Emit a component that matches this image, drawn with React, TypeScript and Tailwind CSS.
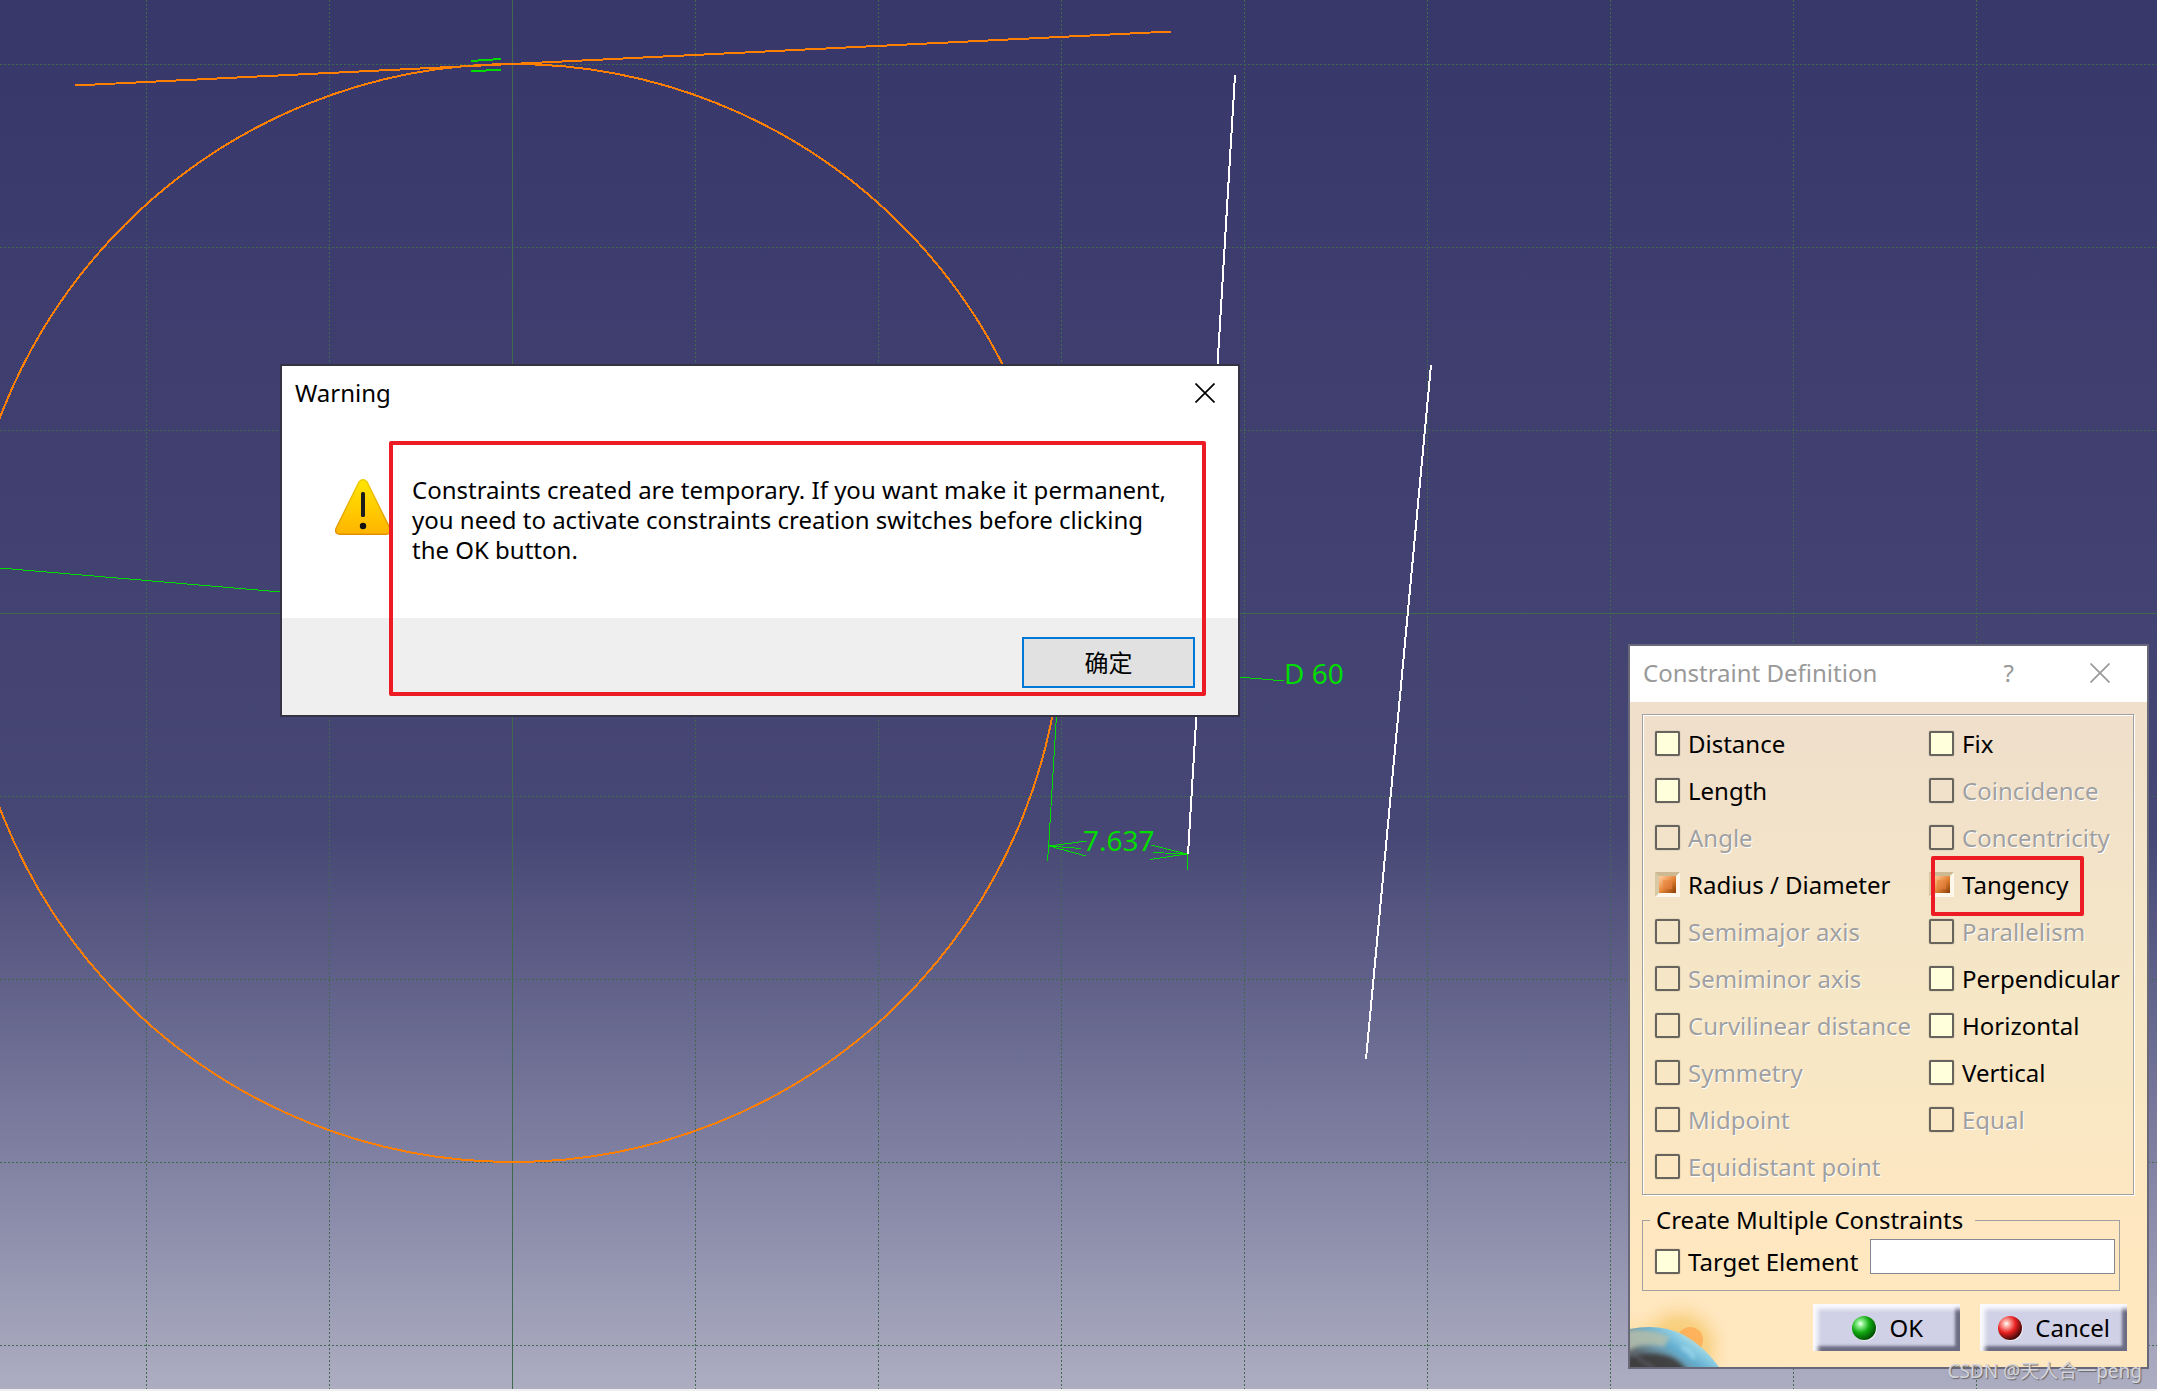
import React from "react";

type Option = { label: string; checked?: boolean; disabled?: boolean };

const leftOptions: Option[] = [
  { label: "Distance" },
  { label: "Length" },
  { label: "Angle", disabled: true },
  { label: "Radius / Diameter", checked: true },
  { label: "Semimajor axis", disabled: true },
  { label: "Semiminor axis", disabled: true },
  { label: "Curvilinear distance", disabled: true },
  { label: "Symmetry", disabled: true },
  { label: "Midpoint", disabled: true },
  { label: "Equidistant point", disabled: true },
];

const rightOptions: Option[] = [
  { label: "Fix" },
  { label: "Coincidence", disabled: true },
  { label: "Concentricity", disabled: true },
  { label: "Tangency", checked: true },
  { label: "Parallelism", disabled: true },
  { label: "Perpendicular" },
  { label: "Horizontal" },
  { label: "Vertical" },
  { label: "Equal", disabled: true },
];

const gridX = [146, 329, 695, 878, 1061, 1244, 1427, 1610, 1793, 1976];
const gridY = [64, 247, 430, 796, 979, 1162, 1345];

function Sketch() {
  return (
    <svg className="absolute inset-0 h-full w-full" aria-hidden="true">
      <g stroke="#41694f" strokeWidth="1" strokeDasharray="2 2" shapeRendering="crispEdges">
        {gridX.map((x) => (
          <line key={x} x1={x + 0.5} x2={x + 0.5} y1="0" y2="100%" />
        ))}
        {gridY.map((y) => (
          <line key={y} y1={y + 0.5} y2={y + 0.5} x1="0" x2="100%" />
        ))}
      </g>
      <g stroke="#41694f" strokeWidth="1" shapeRendering="crispEdges">
        <line x1="512.5" x2="512.5" y1="0" y2="100%" />
        <line y1="613.5" y2="613.5" x1="0" x2="100%" />
      </g>
      <g stroke="#ff8000" strokeWidth="2" fill="none" shapeRendering="crispEdges">
        <circle cx="513" cy="613" r="549" />
        <line x1="75" y1="85.500" x2="1171" y2="31.500" />
      </g>
      <g stroke="#ffffff" strokeWidth="2" shapeRendering="crispEdges">
        <line x1="1235" y1="75" x2="1188" y2="854" />
        <line x1="1431" y1="365" x2="1366" y2="1059" />
      </g>
      <g stroke="#00dc00" strokeWidth="1" shapeRendering="crispEdges">
        <path d="M471 61L501 59M471 71L501 70" strokeWidth="2" />
        <path d="M0 568L281 592M1239 677L1284 681" />
        <path d="M1056.500 715L1049 840L1047.500 861" fill="none" />
        <path d="M1087 841L1049 846L1081 848.500M1049 846L1086 856" fill="none" />
        <path d="M1151 845L1187 854L1153 852.500M1187 854L1150 859.500" fill="none" />
        <path d="M1187.500 854V870" />
      </g>
      <g fill="#00dc00" fontFamily="'Noto Sans', sans-serif" fontSize="28">
        <text x="1284" y="684">D 60</text>
        <text x="1083" y="851">7.637</text>
      </g>
    </svg>
  );
}

function Cross({ className }: { className: string }) {
  return (
    <svg viewBox="0 0 20 20" className={className} fill="none" stroke="currentColor" strokeWidth="1.700">
      <path d="M0.500 0.500L19.500 19.500M19.500 0.500L0.500 19.500" />
    </svg>
  );
}

function WarningIcon() {
  return (
    <svg viewBox="0 0 56 56" className="size-14 shrink-0" role="img" aria-label="Warning">
      <defs>
        <linearGradient id="warn" x1="0" y1="0" x2="0" y2="1">
          <stop offset="0" stopColor="#ffe600" />
          <stop offset="1" stopColor="#ffb400" />
        </linearGradient>
        <linearGradient id="warnEdge" x1="0" y1="0" x2="0" y2="1">
          <stop offset="0" stopColor="#f0cc00" />
          <stop offset="1" stopColor="#e08f00" />
        </linearGradient>
      </defs>
      <path
        d="M24 3Q28 -1.500 32 3L55 49.500Q56.500 55 51.500 55.300H4.500Q-0.500 55 1 49.500Z"
        fill="url(#warn)"
        stroke="url(#warnEdge)"
        strokeWidth="1.400"
      />
      <rect x="26" y="13" width="4" height="25" rx="1.500" fill="#1c1c1c" />
      <circle cx="28" cy="47" r="3.200" fill="#111" />
    </svg>
  );
}

function WarningDialog() {
  return (
    <section
      role="alertdialog"
      aria-labelledby="warning-title"
      className="absolute left-[280px] top-[364px] w-[960px] border-2 border-[#333344] bg-white text-2xl text-black"
    >
      <header className="flex h-14 items-center justify-between pb-0.5 pl-[13px] pr-[23px]">
        <h1 id="warning-title">Warning</h1>
        <button type="button" aria-label="Close">
          <Cross className="size-5" />
        </button>
      </header>
      <div className="flex h-49 items-start gap-[21px] pl-[53px] pt-[57px]">
        <WarningIcon />
        <p className="-mt-1 w-[760px] leading-[30px]">
          Constraints created are temporary. If you want make it permanent,
          <br />
          you need to activate constraints creation switches before clicking
          <br />
          the OK button.
        </p>
      </div>
      <footer className="flex h-[97px] items-start justify-end bg-[#efefef] pr-[43px] pt-[19px]">
        <button
          type="button"
          className="h-[51px] w-[173px] border-2 border-[#0078d7] bg-[#e1e1e1] pb-0.5 font-['Noto_Sans_CJK_SC',sans-serif]"
        >
          确定
        </button>
      </footer>
      <div className="pointer-events-none absolute left-[107px] top-[75px] h-[255px] w-[817px] rounded-xs border-4 border-[#ed1c24]" />
    </section>
  );
}

function CheckOption({ label, checked, disabled }: Option) {
  return (
    <label
      className={
        disabled
          ? "flex h-[47px] items-center gap-2 whitespace-nowrap text-[#a0a0a0] [text-shadow:1px_1px_0_#fff]"
          : "flex h-[47px] items-center gap-2 whitespace-nowrap text-black"
      }
    >
      <input
        type="checkbox"
        defaultChecked={checked}
        disabled={disabled}
        className="relative size-[25px] shrink-0 appearance-none rounded-xs border-2 border-[#66645c] bg-[#ffffdc] shadow-[0_0_1px_#66645c] disabled:bg-transparent checked:rounded-none checked:border-4 checked:border-t-[#cdb994] checked:border-l-[#d8c8a4] checked:border-r-[#fff8ea] checked:border-b-[#fff8ea] checked:bg-linear-to-br checked:from-[#ffd0a0] checked:via-[#e88838] checked:to-[#8a3c00] checked:shadow-none checked:after:absolute checked:after:inset-1 checked:after:bg-linear-to-br checked:after:from-[#f09850] checked:after:to-[#d87030]"
      />
      {label}
    </label>
  );
}

function Ball({ id, light, mid, dark }: { id: string; light: string; mid: string; dark: string }) {
  return (
    <svg viewBox="0 0 26 26" className="size-[26px] shrink-0" aria-hidden="true">
      <defs>
        <radialGradient id={id} cx="0.35" cy="0.32" r="0.7">
          <stop offset="0" stopColor="#ffffff" />
          <stop offset="0.18" stopColor={light} />
          <stop offset="0.55" stopColor={mid} />
          <stop offset="1" stopColor={dark} />
        </radialGradient>
      </defs>
      <circle cx="14" cy="14" r="12" fill="#ffffff" opacity="0.6" />
      <circle cx="13" cy="13" r="12" fill={`url(#${id})`} />
    </svg>
  );
}

function Planet() {
  return (
    <svg viewBox="0 0 110 72" className="absolute bottom-0 left-0 h-[72px] w-[110px]" aria-hidden="true">
      <defs>
        <radialGradient id="glow" cx="50" cy="52" r="54" gradientUnits="userSpaceOnUse">
          <stop offset="0" stopColor="#f9c868" />
          <stop offset="0.5" stopColor="#f8d081" stopOpacity="0.9" />
          <stop offset="1" stopColor="#ffe7c0" stopOpacity="0" />
        </radialGradient>
        <linearGradient id="glowLeft" x1="0" y1="0" x2="0" y2="1">
          <stop offset="0" stopColor="#ffe7c0" stopOpacity="0" />
          <stop offset="1" stopColor="#f6cc6c" />
        </linearGradient>
        <linearGradient id="planet" x1="30" y1="76" x2="58" y2="36" gradientUnits="userSpaceOnUse">
          <stop offset="0" stopColor="#5a6468" />
          <stop offset="0.3" stopColor="#6a90a2" />
          <stop offset="0.55" stopColor="#64aed0" />
          <stop offset="0.8" stopColor="#8fcfe4" />
          <stop offset="1" stopColor="#d0e0cc" />
        </linearGradient>
        <filter id="soft" x="-20%" y="-20%" width="140%" height="140%">
          <feGaussianBlur stdDeviation="2" />
        </filter>
        <clipPath id="disc">
          <path d="M0 34Q30 28 54 40Q74 51 89 72H0Z" />
        </clipPath>
      </defs>
      <path d="M-6 10H54V50H-6Z" fill="url(#glowLeft)" opacity="0.7" filter="url(#soft)" />
      <rect width="110" height="72" fill="url(#glow)" />
      <circle cx="60" cy="45" r="13" fill="#fdae58" opacity="0.9" />
      <g clipPath="url(#disc)">
        <rect width="110" height="72" fill="url(#planet)" />
        <path d="M-4 36Q20 32 40 42L34 52Q10 46 -4 58Z" fill="#b6c0ac" opacity="0.85" filter="url(#soft)" />
        <path d="M-4 64Q14 56 34 60Q50 63 58 78H-4Z" fill="#3c3a3a" opacity="0.9" filter="url(#soft)" />
        <path d="M2 56Q10 66 24 73" fill="none" stroke="#8484a4" strokeWidth="2" opacity="0.6" filter="url(#soft)" />
        <path d="M52 52L60 57L64 64" fill="none" stroke="#b8ecfa" strokeWidth="3" opacity="0.7" filter="url(#soft)" />
      </g>
    </svg>
  );
}

const actionButton =
  "flex h-[47px] w-[147px] items-center justify-end bg-[#d0d0e6] text-black shadow-[inset_5px_5px_4px_#fafaff,inset_-5px_-5px_3px_#6c6c84]";

function ConstraintDialog() {
  return (
    <section
      role="dialog"
      aria-labelledby="constraint-title"
      className="absolute right-2 top-[644px] w-[521px] border-2 border-[#686878] bg-linear-to-b from-[#efdfcb] from-10% via-[#f6e7c6] via-50% to-[#ffe7c0] to-85% text-2xl text-black"
    >
      <header className="flex h-14 items-center bg-white pb-0.5 pl-[13px] text-[#999999]">
        <h2 id="constraint-title" className="grow">
          Constraint Definition
        </h2>
        <button type="button" aria-label="Help" className="mr-[76px]">
          ?
        </button>
        <button type="button" aria-label="Close" className="mr-[37px]">
          <Cross className="size-5" />
        </button>
      </header>

      <div className="relative px-3 pb-4 pt-3">
        <Planet />
        <div className="relative mr-px grid grid-cols-[274px_1fr] border border-[#a0a0a0] pb-1 pl-3 pt-[5px] shadow-[1px_1px_0_#fff,inset_1px_1px_0_#fff]">
          <div>
            {leftOptions.map((o) => (
              <CheckOption key={o.label} {...o} />
            ))}
          </div>
          <div>
            {rightOptions.map((o) => (
              <CheckOption key={o.label} {...o} />
            ))}
          </div>
          <div className="pointer-events-none absolute left-[288px] top-[141px] h-[60px] w-[153px] rounded-xs border-4 border-[#ed1c24]" />
        </div>

        <fieldset className="relative mr-[15px] mt-[7px] h-[89px] min-w-0 border border-[#a0a0a0] pl-3">
          <legend className="-ml-[5px] pl-[6px] pr-3 leading-9">Create Multiple Constraints</legend>
          <div className="flex items-start gap-3">
            <CheckOption label="Target Element" />
            <input
              type="text"
              aria-label="Target element name"
              className="mr-1 mt-px h-[35px] w-0 min-w-0 grow border border-[#828790] bg-white px-2"
            />
          </div>
        </fieldset>

        <div className="relative mr-2 mt-[13px] flex justify-end gap-5">
          <button type="button" className={`${actionButton} gap-3 pr-[37px]`}>
            <Ball id="ball-ok" light="#8ff08f" mid="#10a810" dark="#045004" />
            OK
          </button>
          <button type="button" className={`${actionButton} gap-3 pr-[17px]`}>
            <Ball id="ball-cancel" light="#ffb0a8" mid="#e82020" dark="#400808" />
            Cancel
          </button>
        </div>
      </div>
    </section>
  );
}

export default function App() {
  return (
    <main className="relative min-h-screen overflow-hidden border-b-2 border-[#f0f0f0] bg-linear-to-b from-[#38376a] via-[#474775] via-60% to-[#adadc2] font-['Noto_Sans','Noto_Sans_CJK_SC',sans-serif]">
      <Sketch />
      <ConstraintDialog />
      <WarningDialog />
      <p className="absolute bottom-1 right-[15px] text-[19px] leading-7 text-[#d4d4dc] [text-shadow:1px_1px_1px_#666]">
        CSDN @天人合一peng
      </p>
    </main>
  );
}
